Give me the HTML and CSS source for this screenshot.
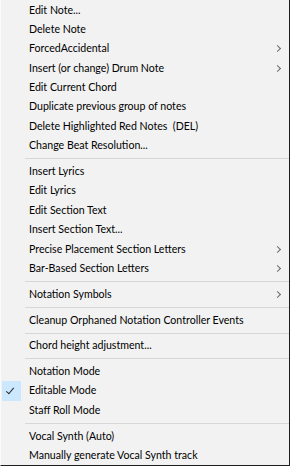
FILE: index.html
```html
<!DOCTYPE html>
<html lang="en">
<head>
  <meta charset="UTF-8" />
  <title>Notation context menu</title>
  <link rel="stylesheet" href="styles.css">
</head>
<body>
  <ul class="menu">
    <li class="item">Edit Note...</li>
    <li class="item">Delete Note</li>
    <li class="item sub">ForcedAccidental</li>
    <li class="item sub">Insert (or change) Drum Note</li>
    <li class="item">Edit Current Chord</li>
    <li class="item">Duplicate previous group of notes</li>
    <li class="item">Delete Highlighted Red Notes&nbsp; (DEL)</li>
    <li class="item">Change Beat Resolution...</li>
    <li class="sep"></li>
    <li class="item">Insert Lyrics</li>
    <li class="item">Edit Lyrics</li>
    <li class="item">Edit Section Text</li>
    <li class="item">Insert Section Text...</li>
    <li class="item sub">Precise Placement Section Letters</li>
    <li class="item sub">Bar-Based Section Letters</li>
    <li class="sep"></li>
    <li class="item sub">Notation Symbols</li>
    <li class="sep"></li>
    <li class="item">Cleanup Orphaned Notation Controller Events</li>
    <li class="sep"></li>
    <li class="item">Chord height adjustment...</li>
    <li class="sep"></li>
    <li class="item">Notation Mode</li>
    <li class="item checked">Editable Mode</li>
    <li class="item">Staff Roll Mode</li>
    <li class="sep"></li>
    <li class="item">Vocal Synth (Auto)</li>
    <li class="item">Manually generate Vocal Synth track</li>
  </ul>
</body>
</html>
```
FILE: styles.css
```css
:root {
  --menu-bg: #f2f2f2;
  --text: #000000;
  --sep: #d7d7d7;
  --check-bg: #cce8ff;
}
* { box-sizing: border-box; }
body {
  margin: 0;
  background: var(--menu-bg);
  font-family: 'Lato', sans-serif;
}
.menu {
  list-style: none;
  margin: 0;
  padding: 0;
  width: 290px;
  height: 466px;
  background: var(--menu-bg);
  border-left: 1px solid #fbfbfb;
  border-right: 1px solid #1e1e1e;
  border-bottom: 1px solid #1e1e1e;
  color: var(--text);
  font-size: 10.6px;
  overflow: hidden;
}
.item {
  position: relative;
  height: 19.4px;
  line-height: 19.4px;
  padding-left: 28px;
  white-space: nowrap;
}
.item:first-child { margin-top: 0.5px; }
.sub::after {
  content: '';
  position: absolute;
  right: 9px; top: 7px;
  width: 4px; height: 4px;
  border-right: 1px solid #6a6a6a;
  border-top: 1px solid #6a6a6a;
  transform: rotate(45deg);
}
.checked::before {
  content: '';
  position: absolute;
  left: 1px; top: 0;
  width: 19px; height: 19.4px;
  background: var(--check-bg);
}
.checked::after {
  content: '';
  position: absolute;
  left: 7px; top: 5px;
  width: 3px; height: 7px;
  border-right: 1.3px solid #2a2a2a;
  border-bottom: 1.3px solid #2a2a2a;
  transform: rotate(40deg);
}
.sep {
  height: 6.4px;
  display: flex;
  align-items: center;
  padding-left: 24px;
}
.sep::before {
  content: '';
  flex: 1;
  height: 1px;
  background: var(--sep);
}
```
